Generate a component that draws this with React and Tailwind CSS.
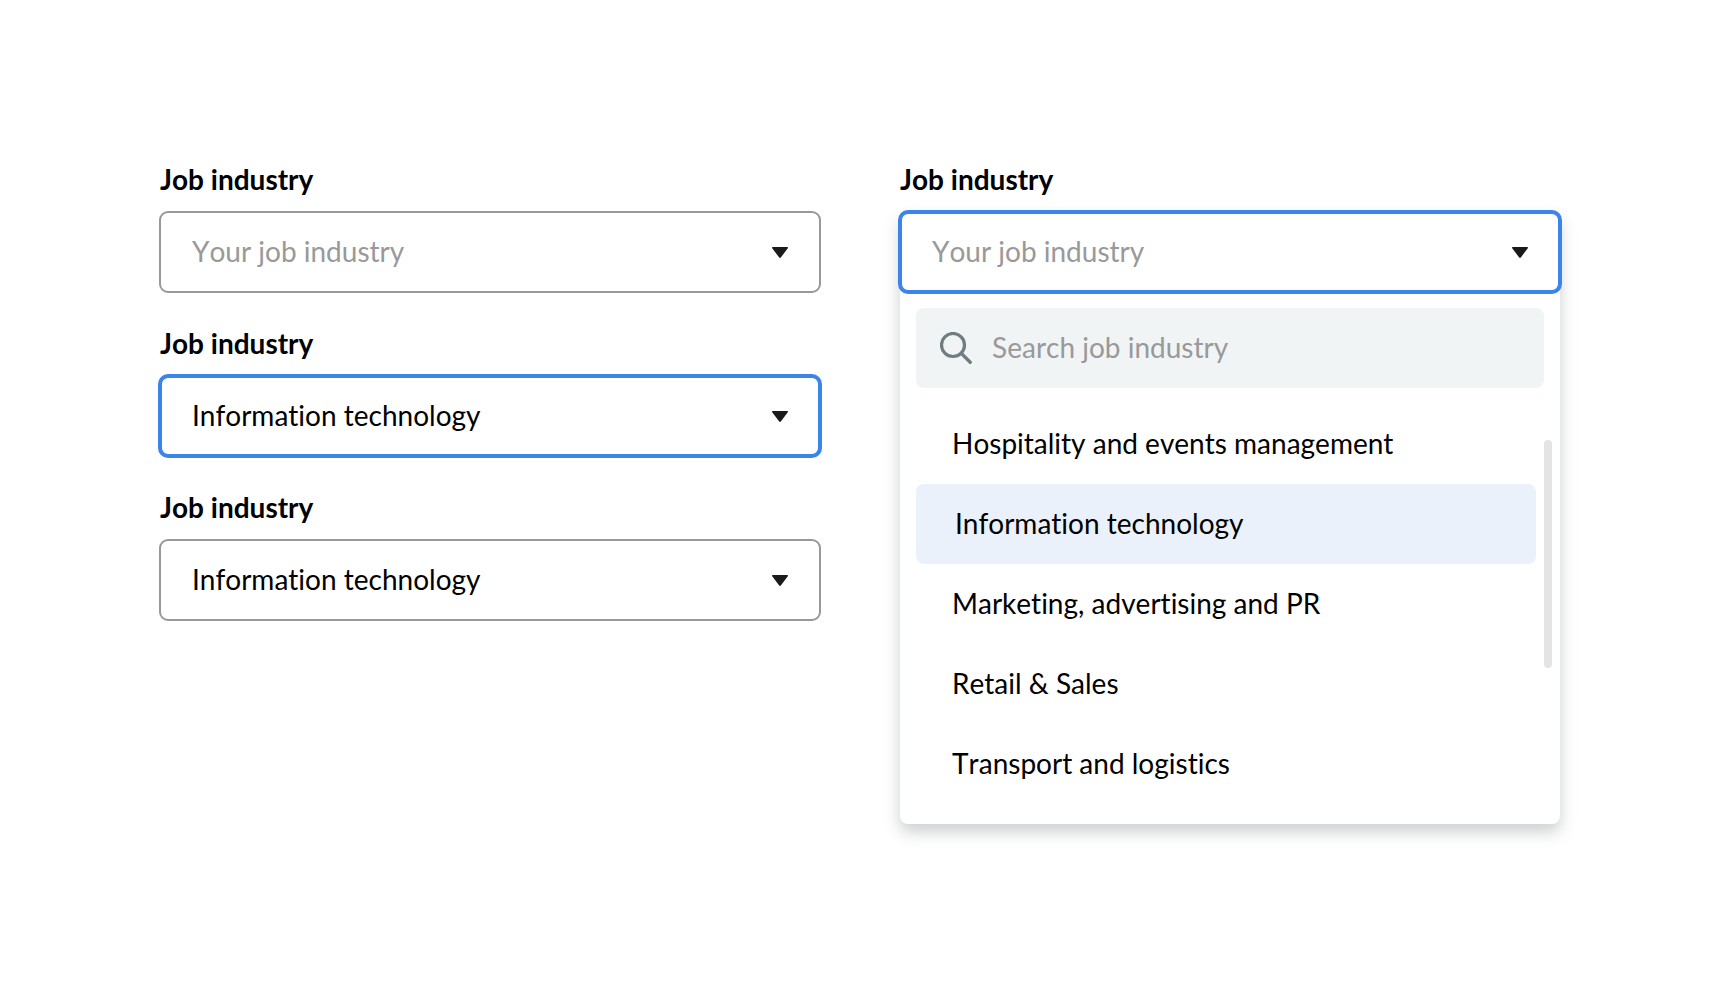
import { useState } from "react";

const INDUSTRIES = [
  "Hospitality and events management",
  "Information technology",
  "Marketing, advertising and PR",
  "Retail & Sales",
  "Transport and logistics",
];

function Caret() {
  return (
    <svg
      aria-hidden="true"
      viewBox="0 0 16 12"
      className="pointer-events-none col-start-1 row-start-1 mr-8 h-3 w-4 self-center justify-self-end"
    >
      <path
        d="M.7 1h14.6c.6 0 .9.7.5 1.2L8.8 11.5c-.4.6-1.2.6-1.6 0L.2 2.2C-.2 1.7.1 1 .7 1Z"
        fill="#1a1a1a"
      />
    </svg>
  );
}

function SearchIcon() {
  return (
    <svg
      aria-hidden="true"
      viewBox="0 0 32 32"
      className="size-8 shrink-0"
      fill="none"
      stroke="#6f7d80"
      strokeLinecap="round"
    >
      <circle cx="13" cy="13" r="11.5" strokeWidth="3.2" />
      <path d="M21.6 21.6 30.2 30.2" strokeWidth="3.4" />
    </svg>
  );
}

function Label({ htmlFor }) {
  return (
    <label htmlFor={htmlFor} className="text-[28px] leading-[38px] font-bold">
      Job industry
    </label>
  );
}

function Select({ id, initial = "", active = false }) {
  const [value, setValue] = useState(initial);
  const outline = active
    ? "outline-4 -outline-offset-2 outline-[#3b85ea]"
    : "outline-2 -outline-offset-1 outline-[#999999]";
  const color = value ? "text-black" : "text-[#999999]";
  return (
    <div className="grid">
      <select
        id={id}
        value={value}
        onChange={(e) => setValue(e.target.value)}
        className={`col-start-1 row-start-1 h-20 w-full appearance-none rounded-lg bg-white pr-16 pb-0.5 pl-8 text-[28px] ${outline} ${color}`}
      >
        <option value="" disabled>
          Your job industry
        </option>
        {INDUSTRIES.map((name) => (
          <option key={name}>{name}</option>
        ))}
      </select>
      <Caret />
    </div>
  );
}

function Field({ id, initial, active }) {
  return (
    <div className="flex flex-col gap-[14px]">
      <Label htmlFor={id} />
      <Select id={id} initial={initial} active={active} />
    </div>
  );
}

function Option({ name, selected }) {
  return (
    <li role="option" aria-selected={selected}>
      <button
        type="button"
        className={`flex h-20 w-full items-center rounded-lg pr-4 pb-0.5 text-left ${
          selected ? "bg-[#ebf1fb] pl-[39px]" : "pl-9"
        }`}
      >
        {name}
      </button>
    </li>
  );
}

function OpenField() {
  return (
    <div className="flex flex-col gap-[14px]">
      <Label htmlFor="industry-open" />
      <div className="rounded-lg bg-white shadow-[0_8px_16px_rgba(50,66,66,0.25)]">
        <Select id="industry-open" active />
        <div className="px-4 pt-4">
          <div className="flex h-20 items-center gap-5 rounded-lg bg-[#f0f4f5] px-6">
            <SearchIcon />
            <input
              type="search"
              aria-label="Search job industry"
              placeholder="Search job industry"
              className="w-full min-w-0 bg-transparent pb-0.5 outline-none placeholder:text-[#999999]"
            />
          </div>
        </div>
        <div className="flex gap-2 pt-4 pr-2 pb-5 pl-4">
          <ul role="listbox" aria-label="Job industry" className="min-w-0 flex-1">
            {INDUSTRIES.map((name) => (
              <Option
                key={name}
                name={name}
                selected={name === "Information technology"}
              />
            ))}
          </ul>
          <div className="mt-9 h-[228px] w-2 rounded-full bg-[#e4e4e4]" />
        </div>
      </div>
    </div>
  );
}

export default function App() {
  return (
    <main className="grid min-h-screen grid-cols-2 items-start gap-20 bg-white p-40 font-['Lato',sans-serif] text-[28px] text-black [font-kerning:none] [font-variant-ligatures:none]">
      <div className="flex flex-col gap-8">
        <Field id="industry-empty" />
        <Field id="industry-active" initial="Information technology" active />
        <Field id="industry-filled" initial="Information technology" />
      </div>
      <OpenField />
    </main>
  );
}
